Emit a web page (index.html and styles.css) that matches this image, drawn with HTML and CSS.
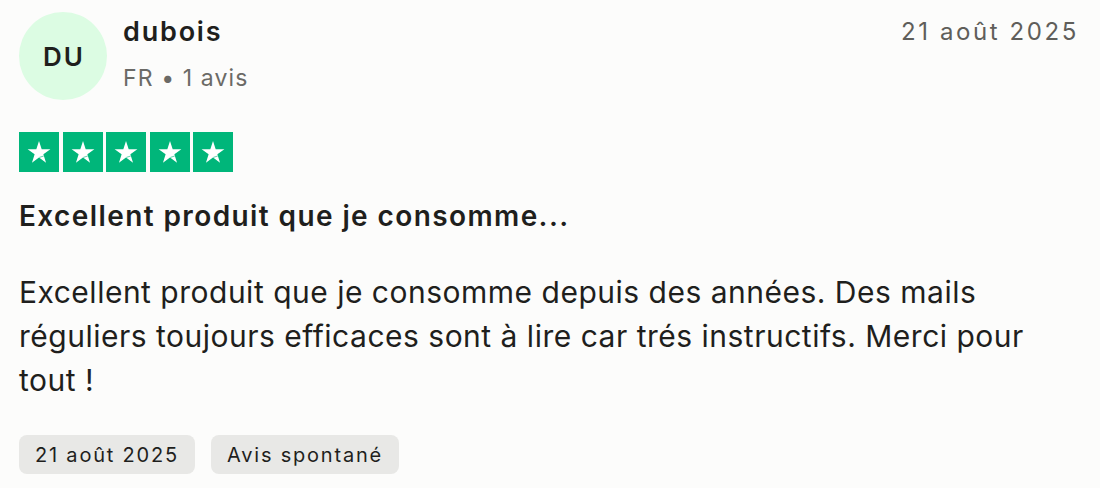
FILE: index.html
```html
<!DOCTYPE html>
<html lang="fr">
<head>
<meta charset="utf-8">
<link rel="stylesheet" href="styles.css">
</head>
<body>
<article class="review">
  <header class="head">
    <div class="consumer">
      <div class="avatar">DU</div>
      <div class="who">
        <div class="name">dubois</div>
        <div class="meta">FR • 1 avis</div>
      </div>
    </div>
    <time class="date">21 août 2025</time>
  </header>
  <div class="stars">
    <span class="star"><svg viewBox="0 0 24 24"><path class="s" d="M12 3.2l2.15 6.6h6.95l-5.6 4.08 2.13 6.62L12 16.4l-5.63 4.1 2.13-6.62-5.6-4.08h6.95z"/><path class="cut" d="M12.3 16.3l3.5-1.1"/></svg></span>
    <span class="star"><svg viewBox="0 0 24 24"><path class="s" d="M12 3.2l2.15 6.6h6.95l-5.6 4.08 2.13 6.62L12 16.4l-5.63 4.1 2.13-6.62-5.6-4.08h6.95z"/><path class="cut" d="M12.3 16.3l3.5-1.1"/></svg></span>
    <span class="star"><svg viewBox="0 0 24 24"><path class="s" d="M12 3.2l2.15 6.6h6.95l-5.6 4.08 2.13 6.62L12 16.4l-5.63 4.1 2.13-6.62-5.6-4.08h6.95z"/><path class="cut" d="M12.3 16.3l3.5-1.1"/></svg></span>
    <span class="star"><svg viewBox="0 0 24 24"><path class="s" d="M12 3.2l2.15 6.6h6.95l-5.6 4.08 2.13 6.62L12 16.4l-5.63 4.1 2.13-6.62-5.6-4.08h6.95z"/><path class="cut" d="M12.3 16.3l3.5-1.1"/></svg></span>
    <span class="star"><svg viewBox="0 0 24 24"><path class="s" d="M12 3.2l2.15 6.6h6.95l-5.6 4.08 2.13 6.62L12 16.4l-5.63 4.1 2.13-6.62-5.6-4.08h6.95z"/><path class="cut" d="M12.3 16.3l3.5-1.1"/></svg></span>
  </div>
  <h2 class="title">Excellent produit que je consomme...</h2>
  <p class="body">Excellent produit que je consomme depuis des années. Des mails réguliers toujours efficaces sont à lire car trés instructifs. Merci pour tout !</p>
  <div class="tags">
    <span class="tag">21 août 2025</span>
    <span class="tag">Avis spontané</span>
  </div>
</article>
</body>
</html>
```
FILE: styles.css
```css
html, body {
  margin: 0;
  padding: 0;
  background: #fcfcfb;
}
body {
  font-family: Inter, "Noto Sans", sans-serif;
  color: #1f1f1d;
}
.review {
  padding: 12px 21px 0 19px;
  width: 1100px;
  box-sizing: border-box;
}
.head {
  display: flex;
  justify-content: space-between;
  align-items: flex-start;
}
.consumer {
  display: flex;
  align-items: flex-start;
  gap: 16px;
}
.avatar {
  width: 88px;
  height: 88px;
  border-radius: 50%;
  background: #dcfce3;
  display: flex;
  align-items: center;
  justify-content: center;
  font-size: 26px;
  font-weight: 600;
  letter-spacing: 2px;
  text-indent: 2px;
  color: #1f1f1d;
}
.who {
  display: flex;
  flex-direction: column;
  gap: 15px;
  padding-top: 3px;
}
.name {
  font-size: 27px;
  font-weight: 600;
  line-height: 34px;
  letter-spacing: 1.8px;
  color: #1f1f1d;
}
.meta {
  font-size: 23px;
  line-height: 28px;
  letter-spacing: 1.1px;
  color: #6b6a66;
}
.date {
  font-size: 24px;
  line-height: 30px;
  padding-top: 5px;
  letter-spacing: 2.6px;
  color: #5f5e5a;
}
.stars {
  display: flex;
  gap: 3.5px;
  margin-top: 32px;
}
.star {
  width: 40px;
  height: 40px;
  background: #00b67a;
  display: flex;
  align-items: center;
  justify-content: center;
}
.star svg {
  width: 30px;
  height: 30px;
}
.star .s {
  fill: #ffffff;
}
.star .cut {
  stroke: #00b67a;
  stroke-width: 0.5;
  fill: none;
}
.title {
  margin: 28px 0 0;
  font-size: 28px;
  font-weight: 600;
  line-height: 32px;
  letter-spacing: 1.4px;
  color: #1f1f1d;
}
.body {
  margin: 38px 0 0;
  font-size: 30px;
  line-height: 44px;
  letter-spacing: 0.5px;
  color: #1f1f1d;
}
.tags {
  display: flex;
  gap: 16px;
  margin-top: 33px;
}
.tag {
  background: #e8e8e6;
  border-radius: 8px;
  padding: 0 16px;
  height: 39px;
  display: flex;
  align-items: center;
  font-size: 20px;
  letter-spacing: 1.8px;
  color: #1f1f1d;
}
```
